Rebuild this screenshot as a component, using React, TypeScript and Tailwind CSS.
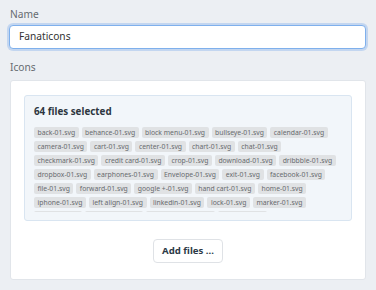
import React from "react";

const files = [
  "back-01.svg", "behance-01.svg", "block menu-01.svg", "bullseye-01.svg", "calendar-01.svg",
  "camera-01.svg", "cart-01.svg", "center-01.svg", "chart-01.svg", "chat-01.svg",
  "checkmark-01.svg", "credit card-01.svg", "crop-01.svg", "download-01.svg", "dribbble-01.svg",
  "dropbox-01.svg", "earphones-01.svg", "Envelope-01.svg", "exit-01.svg", "facebook-01.svg",
  "file-01.svg", "forward-01.svg", "google +-01.svg", "hand cart-01.svg", "home-01.svg",
  "iphone-01.svg", "left align-01.svg", "linkedin-01.svg", "lock-01.svg", "marker-01.svg",
  "menu-01.svg", "message-01.svg", "microphone-01.svg", "minus-01.svg",
];

export default function App() {
  return (
    <div className="w-[376px] h-[290px] bg-[#eceff3] px-[9px] pt-[7px] font-['Noto_Sans',sans-serif] overflow-hidden">
      <label className="block text-[10.2px] leading-[14px] text-[#666b70] pl-px">Name</label>
      <div className="mt-[4px] h-[24px] w-[357px] rounded-[4px] border border-[#7fb0ec] bg-white shadow-[0_0_0_2px_rgba(120,170,235,0.35)] flex items-center px-[9px]">
        <span className="text-[10.2px] text-[#333]">Fanaticons</span>
      </div>
      <label className="block mt-[11px] text-[10.2px] leading-[14px] text-[#666b70] pl-px">Icons</label>
      <div className="mt-[6px] ml-px w-[356px] h-[200px] rounded-[3px] border border-[#e1e5ea] bg-white pt-[14px] px-[13px]">
        <div className="h-[126px] rounded-[3px] border border-[#d9e5f1] bg-[#f2f6fa] pl-[9px] pr-[4px] pt-[9px] flex flex-col">
          <div className="text-[9.8px] leading-[14px] font-bold text-[#2d3640]">64 files selected</div>
          <div className="mt-[8px] h-[85px] overflow-hidden flex flex-wrap gap-x-[3px] gap-y-[3px] content-start">
            {files.map((f) => (
              <span key={f} className="h-[11px] rounded-[2px] bg-[#e0e2e4] px-[3.5px] text-[6.8px] leading-[11px] text-[#676a6e] whitespace-nowrap">
                {f}
              </span>
            ))}
          </div>
        </div>
        <div className="flex justify-center mt-[18px]">
          <button className="h-[24px] px-[8px] rounded-[4px] border border-[#dfe2e6] bg-white text-[9.6px] leading-[14px] font-bold text-[#2c3a48] whitespace-nowrap">
            Add files ...
          </button>
        </div>
      </div>
    </div>
  );
}
